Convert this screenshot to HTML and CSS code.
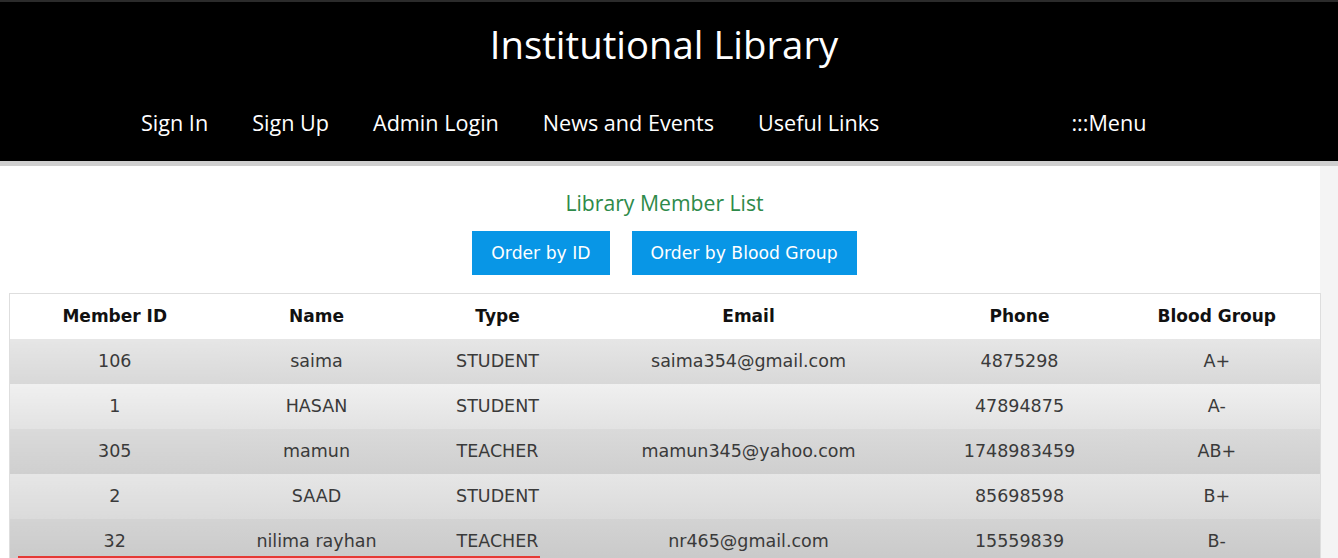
FILE: index.html
```html
<!DOCTYPE html>
<html lang="en">
<head>
<meta charset="utf-8">
<title>Institutional Library</title>
<link rel="stylesheet" href="styles.css">
</head>
<body>
<header class="site-header">
  <h1 class="site-title">Institutional Library</h1>
  <nav class="main-nav">
    <ul class="nav-links">
      <li><a href="#">Sign In</a></li>
      <li><a href="#">Sign Up</a></li>
      <li><a href="#">Admin Login</a></li>
      <li><a href="#">News and Events</a></li>
      <li><a href="#">Useful Links</a></li>
    </ul>
    <a class="menu-toggle" href="#">:::Menu</a>
  </nav>
</header>
<main class="content">
  <h2 class="list-title">Library Member List</h2>
  <div class="actions">
    <button class="btn">Order by ID</button>
    <button class="btn">Order by Blood Group</button>
  </div>
  <table class="members">
    <colgroup>
      <col class="c-id"><col class="c-name"><col class="c-type"><col class="c-email"><col class="c-phone"><col class="c-blood">
    </colgroup>
    <thead>
      <tr><th>Member ID</th><th>Name</th><th>Type</th><th>Email</th><th>Phone</th><th>Blood Group</th></tr>
    </thead>
    <tbody>
      <tr class="dark"><td>106</td><td>saima</td><td>STUDENT</td><td>saima354@gmail.com</td><td>4875298</td><td>A+</td></tr>
      <tr class="light"><td>1</td><td>HASAN</td><td>STUDENT</td><td></td><td>47894875</td><td>A-</td></tr>
      <tr class="dark"><td>305</td><td>mamun</td><td>TEACHER</td><td>mamun345@yahoo.com</td><td>1748983459</td><td>AB+</td></tr>
      <tr class="light"><td>2</td><td>SAAD</td><td>STUDENT</td><td></td><td>85698598</td><td>B+</td></tr>
      <tr class="dark"><td>32</td><td>nilima rayhan</td><td>TEACHER</td><td>nr465@gmail.com</td><td>15559839</td><td>B-</td></tr>
    </tbody>
  </table>
</main>
<div class="progress-bar"></div>
</body>
</html>
```

FILE: styles.css
```css
* { box-sizing: border-box; }

html, body {
  margin: 0;
  padding: 0;
}

body {
  background: #f4f4f4;
  font-family: "DejaVu Sans", Verdana, sans-serif;
  overflow: hidden;
}

.site-header {
  background: #000;
  color: #fff;
  height: 166px;
  border-top: 2px solid #2b2b2b;
  border-bottom: 5px solid #cfcfcf;
  font-family: "Open Sans", "Noto Sans", sans-serif;
}

.site-title {
  margin: 0;
  padding: 18px 10px 0 0;
  text-align: center;
  font-weight: 400;
  font-size: 38.3px;
  line-height: 48px;
  letter-spacing: 0;
}

.main-nav {
  display: flex;
  align-items: center;
  margin-top: 40px;
  padding-left: 141px;
}

.nav-links {
  display: flex;
  gap: 44px;
  list-style: none;
  margin: 0;
  padding: 0;
}

.nav-links a,
.menu-toggle {
  color: #fff;
  text-decoration: none;
  font-size: 21.6px;
  line-height: 30px;
}

.menu-toggle {
  margin-left: 192px;
}

.content {
  background: #fff;
  margin: 0 18px 0 0;
  padding: 20px 0 0 9px;
  min-height: 400px;
}

.list-title {
  margin: 0;
  text-align: center;
  color: #2e8a4a;
  font-family: "Open Sans", "Noto Sans", sans-serif;
  font-weight: 400;
  font-size: 21.2px;
  line-height: 34px;
}

.actions {
  display: flex;
  justify-content: center;
  gap: 22px;
  margin-top: 11px;
}

.btn {
  background: #0896e6;
  color: #fff;
  border: 0;
  height: 44px;
  padding: 0 19px;
  font-family: "DejaVu Sans", Verdana, sans-serif;
  font-size: 17.2px;
}

.members {
  margin-top: 18px;
  width: 1311px;
  border-collapse: collapse;
  table-layout: fixed;
  border: 1px solid #dedede;
  color: #3a3a3a;
  font-size: 17.5px;
}

.c-id { width: 210px; }
.c-name { width: 194px; }
.c-type { width: 168px; }
.c-email { width: 334px; }
.c-phone { width: 208px; }
.c-blood { width: 197px; }

.members th,
.members td {
  height: 45px;
  padding: 0;
  text-align: center;
  vertical-align: middle;
}

.members th:last-child,
.members td:last-child {
  padding-right: 10px;
}

.members th {
  background: #fff;
  color: #111;
  font-weight: 700;
  font-size: 17px;
}

.members tr.dark td {
  background: linear-gradient(#e6e6e6, #d8d8d8);
}

.members tr.light td {
  background: linear-gradient(#f0f0f0, #e2e2e2);
}

.members tbody tr:nth-child(3) td { background: linear-gradient(#dadada, #cfcfcf); }
.members tbody tr:nth-child(4) td { background: linear-gradient(#e6e6e6, #dadada); }
.members tbody tr:nth-child(5) td { background: linear-gradient(#d3d3d3, #c9c9c9); }

.progress-bar {
  position: fixed;
  left: 18px;
  bottom: 0;
  width: 522px;
  height: 2px;
  background: #e53935;
}
```
